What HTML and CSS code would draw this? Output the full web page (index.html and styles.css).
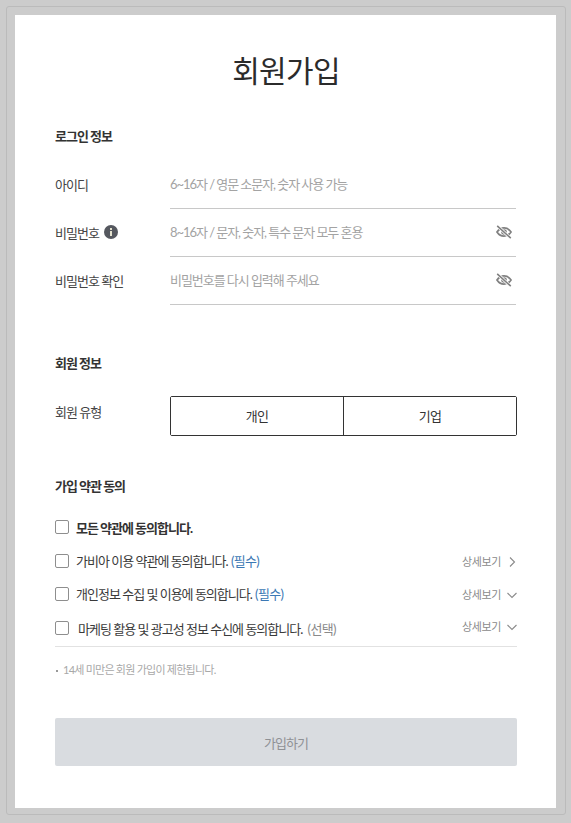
FILE: index.html
```html
<!DOCTYPE html>
<html lang="ko">
<head>
    <meta charset="UTF-8">
    <title>회원가입</title>
    <link rel="stylesheet" href="styles.css">
</head>
<body>
    <div class="frame">
        <main class="card">
            <h1 class="title">회원가입</h1>

            <h2 class="section-title">로그인 정보</h2>
            <div class="field">
                <label class="field-label">아이디</label>
                <div class="field-input"><span class="placeholder">6~16자 / 영문 소문자, 숫자 사용 가능</span></div>
            </div>
            <div class="field">
                <label class="field-label">비밀번호
                    <svg class="info-icon" viewBox="0 0 14 14" width="14" height="14">
                        <circle cx="7" cy="7" r="7" fill="#55585f"/>
                        <rect x="6" y="6" width="2" height="5" fill="#e4e2cf"/>
                        <rect x="6" y="3" width="2" height="2" fill="#e4e2cf"/>
                    </svg>
                </label>
                <div class="field-input">
                    <span class="placeholder">8~16자 / 문자, 숫자, 특수 문자 모두 혼용</span>
                    <svg class="eye-icon" viewBox="0 0 16 14" width="16" height="14">
                        <path d="M1 7c2-3 4.300-4.200 7-4.200S13 4 15 7c-2 3-4.300 4.200-7 4.200S3 10 1 7z" fill="none" stroke="#808080" stroke-width="1.800"/>
                        <circle cx="8" cy="7" r="2.800" fill="#808080"/>
                        <path d="M1.500 .8l13 12.400" stroke="#ffffff" stroke-width="3"/>
                        <path d="M1.200 .8l13.600 12.400" stroke="#808080" stroke-width="1.600"/>
                    </svg>
                </div>
            </div>
            <div class="field">
                <label class="field-label">비밀번호 확인</label>
                <div class="field-input">
                    <span class="placeholder">비밀번호를 다시 입력해 주세요</span>
                    <svg class="eye-icon" viewBox="0 0 16 14" width="16" height="14">
                        <path d="M1 7c2-3 4.300-4.200 7-4.200S13 4 15 7c-2 3-4.300 4.200-7 4.200S3 10 1 7z" fill="none" stroke="#808080" stroke-width="1.800"/>
                        <circle cx="8" cy="7" r="2.800" fill="#808080"/>
                        <path d="M1.500 .8l13 12.400" stroke="#ffffff" stroke-width="3"/>
                        <path d="M1.200 .8l13.600 12.400" stroke="#808080" stroke-width="1.600"/>
                    </svg>
                </div>
            </div>

            <h2 class="section-title member-title">회원 정보</h2>
            <div class="member-type">
                <span class="field-label">회원 유형</span>
                <div class="segmented">
                    <button class="segment">개인</button>
                    <button class="segment">기업</button>
                </div>
            </div>

            <h2 class="section-title terms-title">가입 약관 동의</h2>
            <div class="check-row all-row">
                <span class="checkbox"></span>
                <span class="check-text strong">모든 약관에 동의합니다.</span>
            </div>
            <div class="check-row">
                <span class="checkbox"></span>
                <span class="check-text">가비아 이용 약관에 동의합니다. <em class="required">(필수)</em></span>
                <a class="more">상세보기
                    <svg class="chevron" viewBox="0 0 12 12" width="12" height="12"><path d="M4 1.500l4.500 4.500L4 10.500" fill="none" stroke="#8a8a8a" stroke-width="1.100"/></svg>
                </a>
            </div>
            <div class="check-row">
                <span class="checkbox"></span>
                <span class="check-text">개인정보 수집 및 이용에 동의합니다. <em class="required">(필수)</em></span>
                <a class="more">상세보기
                    <svg class="chevron" viewBox="0 0 12 12" width="12" height="12"><path d="M1.500 4L6 8.500 10.500 4" fill="none" stroke="#8a8a8a" stroke-width="1.100"/></svg>
                </a>
            </div>
            <div class="check-row last-row">
                <span class="checkbox"></span>
                <span class="check-text marketing">마케팅 활용 및 광고성 정보 수신에 동의합니다. <em class="optional">(선택)</em></span>
                <a class="more">상세보기
                    <svg class="chevron" viewBox="0 0 12 12" width="12" height="12"><path d="M1.500 4L6 8.500 10.500 4" fill="none" stroke="#8a8a8a" stroke-width="1.100"/></svg>
                </a>
            </div>
            <p class="notice">14세 미만은 회원 가입이 제한됩니다.</p>

            <button class="submit">가입하기</button>
        </main>
    </div>
</body>
</html>
```

FILE: styles.css
```css
* {
    box-sizing: border-box;
}
body {
    margin: 0;
    padding: 6px 5px 8px 6px;
    height: 823px;
    overflow: hidden;
    background: #cccccc;
    font-family: Lato, "Noto Sans CJK KR", sans-serif;
    color: #333;
}
.frame {
    height: 809px;
    padding: 8px 9px 6px 8px;
    border: 1px solid #bbbbbb;
    border-radius: 3px;
}
.card {
    height: 793px;
    padding: 0 39px 0 40px;
    background: #fff;
}
.title {
    margin: 0;
    padding-top: 35px;
    font-size: 30px;
    line-height: 40px;
    font-weight: 400;
    text-align: center;
    letter-spacing: -0.7px;
    color: #2b2b2b;
}
.section-title {
    margin: 0;
    padding-top: 36px;
    font-size: 13px;
    line-height: 20px;
    font-weight: 700;
    letter-spacing: -1px;
    color: #333;
}
.field {
    display: flex;
    height: 48px;
}
.section-title + .field {
    margin-top: 15px;
}
.field-label {
    display: flex;
    align-items: center;
    gap: 5px;
    width: 115px;
    height: 46px;
    font-size: 13px;
    letter-spacing: -1px;
    color: #444;
}
.field-input {
    flex: 1;
    display: flex;
    align-items: center;
    justify-content: space-between;
    height: 48px;
    margin-right: 1px;
    padding: 0 4px 2px 0;
    border-bottom: 1px solid #c8c8c8;
    font-size: 13px;
    letter-spacing: -1.05px;
}
.eye-icon {
    margin-top: 1px;
}
.placeholder {
    color: #a3a3a3;
}
.member-title {
    padding-top: 48px;
}
.member-type {
    display: flex;
    margin-top: 23px;
}
.member-type .field-label {
    height: 30px;
}
.segmented {
    flex: 1;
    display: flex;
    height: 40px;
    border: 1px solid #333;
    border-radius: 2px;
}
.segment {
    flex: 1;
    padding: 0 0 2px;
    border: 0;
    background: #fff;
    font-family: inherit;
    font-size: 13px;
    letter-spacing: -0.8px;
    color: #333;
}
.segment + .segment {
    border-left: 1px solid #333;
}
.terms-title {
    padding-top: 40px;
}
.check-row {
    display: flex;
    align-items: center;
    height: 33px;
    font-size: 13px;
    letter-spacing: -1px;
}
.all-row {
    height: 34px;
    margin-top: 14px;
}
.last-row {
    height: 37px;
    border-bottom: 1px solid #e2e2e2;
}
.last-row .more {
    padding-bottom: 4px;
}
.checkbox {
    flex: none;
    width: 14px;
    height: 14px;
    margin-right: 7px;
    border: 1px solid #8e8e8e;
    border-radius: 2px;
}
.check-text {
    flex: 1;
    color: #3a3a3a;
}
.strong {
    font-weight: 700;
    color: #333;
}
.marketing {
    padding-left: 2px;
}
.required {
    margin-left: 1px;
    font-style: normal;
    letter-spacing: -0.7px;
    color: #3b78b4;
}
.optional {
    margin-left: 3px;
    font-style: normal;
    letter-spacing: -0.7px;
    color: #8a8a8a;
}
.more {
    display: flex;
    align-items: center;
    gap: 5px;
    margin-right: -1px;
    font-size: 11px;
    letter-spacing: -0.4px;
    color: #8a8a8a;
}
.chevron {
    margin-top: 2px;
}
.notice {
    margin: 0;
    padding: 15px 0 0 8px;
    position: relative;
    font-size: 11px;
    line-height: 16px;
    letter-spacing: -0.75px;
    color: #a8a8a8;
}
.notice::before {
    content: "";
    position: absolute;
    left: 1px;
    top: 23px;
    width: 2px;
    height: 2px;
    background: #999;
}
.submit {
    display: block;
    width: 100%;
    height: 48px;
    margin-top: 40px;
    border: 0;
    border-radius: 2px;
    background: #d9dce0;
    font-family: inherit;
    font-size: 13px;
    letter-spacing: -0.9px;
    color: #8f9195;
}
```
